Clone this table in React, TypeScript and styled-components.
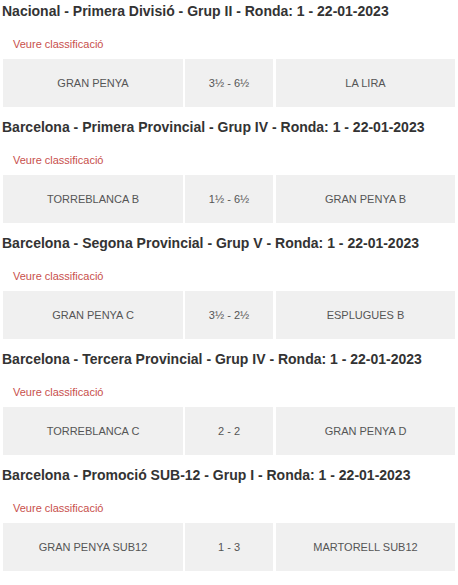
import React from "react";
import styled, { createGlobalStyle } from "styled-components";

const Global = createGlobalStyle`
  html, body { margin: 0; padding: 0; background: #fff; }
  body { font-family: "Liberation Sans", Arial, sans-serif; }
`;

const Page = styled.div`
  display: flex;
  flex-direction: column;
  padding: 3px 2px 0 3px;
`;

const Section = styled.section`
  display: flex;
  flex-direction: column;
  height: 116px;
`;

const Title = styled.h3`
  margin: 0 0 0 -1px;
  font-size: 14px;
  line-height: 17px;
  font-weight: bold;
  color: #333;
`;

const Link = styled.a`
  margin: 18px 0 0 10px;
  font-size: 11px;
  line-height: 13px;
  color: #c8504c;
  text-decoration: none;
  cursor: pointer;
`;

const Row = styled.div`
  display: grid;
  grid-template-columns: 180px 88px 180px;
  column-gap: 2px;
  margin-top: 8px;
  height: 48px;
`;

const Cell = styled.div<{ $last?: boolean }>`
  background: #f0f0f0;
  display: flex;
  align-items: center;
  justify-content: center;
  font-size: 11px;
  color: #555;
  margin-left: ${(p) => (p.$last ? "1px" : "0")};
`;

const data = [
  { title: "Nacional - Primera Divisió - Grup II - Ronda: 1 - 22-01-2023", home: "GRAN PENYA", score: "3½ - 6½", away: "LA LIRA" },
  { title: "Barcelona - Primera Provincial - Grup IV - Ronda: 1 - 22-01-2023", home: "TORREBLANCA B", score: "1½ - 6½", away: "GRAN PENYA B" },
  { title: "Barcelona - Segona Provincial - Grup V - Ronda: 1 - 22-01-2023", home: "GRAN PENYA C", score: "3½ - 2½", away: "ESPLUGUES B" },
  { title: "Barcelona - Tercera Provincial - Grup IV - Ronda: 1 - 22-01-2023", home: "TORREBLANCA C", score: "2 - 2", away: "GRAN PENYA D" },
  { title: "Barcelona - Promoció SUB-12 - Grup I - Ronda: 1 - 22-01-2023", home: "GRAN PENYA SUB12", score: "1 - 3", away: "MARTORELL SUB12" },
];

export default function App() {
  return (
    <>
      <Global />
      <Page>
        {data.map((d) => (
          <Section key={d.title}>
            <Title>{d.title}</Title>
            <Link>Veure classificació</Link>
            <Row>
              <Cell>{d.home}</Cell>
              <Cell>{d.score}</Cell>
              <Cell $last>{d.away}</Cell>
            </Row>
          </Section>
        ))}
      </Page>
    </>
  );
}
